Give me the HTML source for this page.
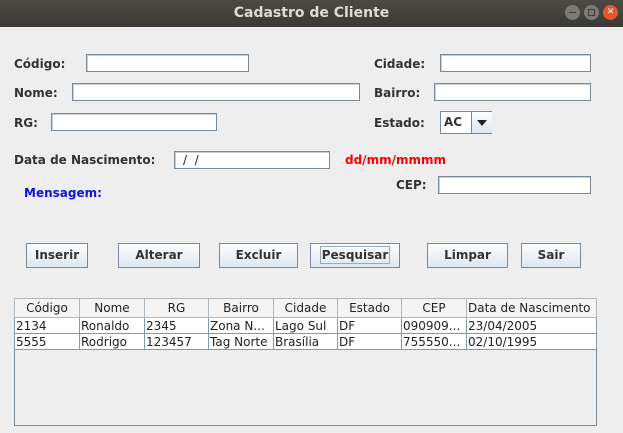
<!DOCTYPE html>
<html><head><meta charset="utf-8"><style>
*{margin:0;padding:0;box-sizing:border-box}
body{width:623px;height:433px;background:#eeeeee;position:relative;overflow:hidden;font-family:"DejaVu Sans","Liberation Sans",sans-serif}
.t{position:absolute;font-size:12px;font-weight:bold;color:#333;white-space:nowrap;line-height:14px}
.f{position:absolute;background:#fff;border:1px solid #7a8a99;box-shadow:inset 1px 1px 0 #c8d0d8}
.b{position:absolute;top:243px;height:25px;border:1px solid #7a8a99;background:linear-gradient(#fdfeff,#dde6ef);font-size:12px;font-weight:bold;color:#333;text-align:center;line-height:23px}
table{position:absolute;left:14px;top:298px;border-collapse:collapse;font-size:12px;color:#222;table-layout:fixed;font-family:"DejaVu Sans","Liberation Sans",sans-serif}
td,th{border:1px solid #8a98a6;height:16px;padding:0 1px;overflow:hidden;white-space:nowrap;font-weight:normal;line-height:14px}
th{height:19px;background:#f4f4f4;text-align:center;border-color:#b0b8c0}
td{background:#fff}
.c{position:absolute;top:5px;width:15px;height:15px;border-radius:50%}
</style></head><body>
<div style="position:absolute;left:0;top:0;width:623px;height:27px;background:linear-gradient(#4d4a45,#3b3935)"></div>
<div style="position:absolute;left:0;top:5px;width:623px;text-align:center;color:#dfdbd2;font-size:14px;font-weight:bold;font-family:'DejaVu Sans',sans-serif">Cadastro de Cliente</div>
<div class="c" style="left:565px;background:#7c7a76"><div style="position:absolute;left:4px;top:7px;width:7px;height:1px;background:#3c3b38"></div></div>
<div class="c" style="left:584px;background:#7c7a76"><div style="position:absolute;left:4px;top:4px;width:7px;height:7px;border:1px solid #3c3b38"></div></div>
<div class="c" style="left:603px;background:#e8562a;color:#fff;font-size:9px;text-align:center;line-height:15px">✕</div>

<div class="t" style="left:14px;top:57px">Código:</div><div class="f" style="left:86px;top:54px;width:163px;height:18px"></div>
<div class="t" style="left:14px;top:86px">Nome:</div><div class="f" style="left:72px;top:83px;width:288px;height:18px"></div>
<div class="t" style="left:14px;top:116px">RG:</div><div class="f" style="left:51px;top:113px;width:166px;height:18px"></div>
<div class="t" style="left:374px;top:57px">Cidade:</div><div class="f" style="left:440px;top:54px;width:151px;height:18px"></div>
<div class="t" style="left:374px;top:86px">Bairro:</div><div class="f" style="left:434px;top:83px;width:157px;height:18px"></div>
<div class="t" style="left:374px;top:116px">Estado:</div>
<div style="position:absolute;left:440px;top:111px;width:52px;height:23px;border:1px solid #7a8a99;background:#fff">
<span style="position:absolute;left:3px;top:3px;font-size:12px;font-weight:bold;color:#333">AC</span>
<div style="position:absolute;left:30px;top:0;width:21px;height:21px;border-left:1px solid #7a8a99;background:linear-gradient(#fdfeff,#dde6ef)"><div style="position:absolute;left:5px;top:8px;border-left:5px solid transparent;border-right:5px solid transparent;border-top:6px solid #222"></div></div></div>
<div class="t" style="left:14px;top:153px">Data de Nascimento:</div>
<div class="f" style="left:174px;top:151px;width:156px;height:18px"><span style="position:absolute;left:8px;top:1px;font-size:12px;color:#222">/ &nbsp;/</span></div>
<div class="t" style="left:345px;top:153px;color:#f00">dd/mm/mmmm</div>
<div class="t" style="left:24px;top:186px;color:#1010ee">Mensagem:</div>
<div class="t" style="left:396px;top:178px">CEP:</div><div class="f" style="left:438px;top:176px;width:153px;height:18px"></div>

<div class="b" style="left:26px;width:62px">Inserir</div>
<div class="b" style="left:118px;width:82px">Alterar</div>
<div class="b" style="left:219px;width:79px">Excluir</div>
<div class="b" style="left:310px;width:90px"><span style="border:1px solid #9ab;padding:0 1px;line-height:16px;display:inline-block">Pesquisar</span></div>
<div class="b" style="left:427px;width:81px">Limpar</div>
<div class="b" style="left:521px;width:60px">Sair</div>

<div style="position:absolute;left:14px;top:298px;width:583px;height:128px;border:1px solid #7a8a99;background:#eee"></div>
<table>
<colgroup><col style="width:65px"><col style="width:65px"><col style="width:64px"><col style="width:65px"><col style="width:64px"><col style="width:64px"><col style="width:65px"><col style="width:130px"></colgroup>
<tr><th>Código</th><th>Nome</th><th>RG</th><th>Bairro</th><th>Cidade</th><th>Estado</th><th>CEP</th><th style="text-align:left">Data de Nascimento</th></tr>
<tr><td>2134</td><td>Ronaldo</td><td>2345</td><td>Zona N...</td><td>Lago Sul</td><td>DF</td><td>090909...</td><td>23/04/2005</td></tr>
<tr><td>5555</td><td>Rodrigo</td><td>123457</td><td>Tag Norte</td><td>Brasília</td><td>DF</td><td>755550...</td><td>02/10/1995</td></tr>
</table>
</body></html>
